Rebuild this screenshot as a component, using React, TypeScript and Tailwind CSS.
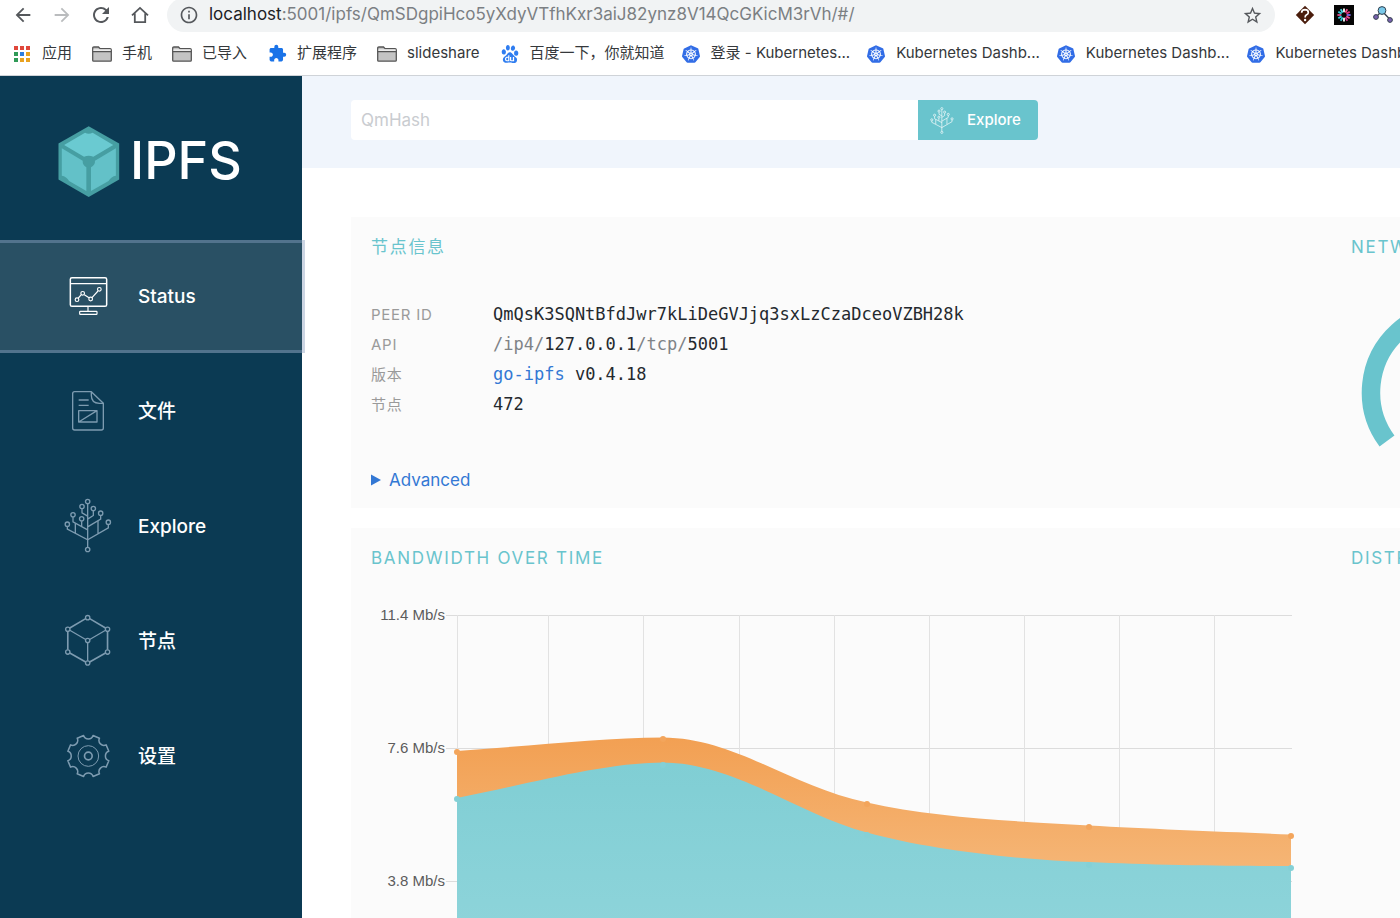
import React from "react";
import { MdArrowBack, MdArrowForward, MdExtension, MdInfoOutline, MdRefresh, MdStarBorder } from "react-icons/md";
import { SiBaidu, SiKubernetes } from "react-icons/si";

type IconProps = { className?: string };

/* ---------- browser icons ---------- */

function HomeIcon() {
  return (
    <svg className="h-5 w-5" viewBox="0 0 20 20" fill="none" stroke="#55585c" strokeWidth="1.8">
      <path d="M2 10.4 10 2.9l8 7.5M4.8 8.6v8.6h10.4V8.6" />
    </svg>
  );
}

function AppsIcon() {
  const colors = ["#e0473b", "#e0473b", "#e0473b", "#2f9a57", "#2a7de1", "#e9a220", "#2f9a57", "#e9a220", "#e9a220"];
  return (
    <svg className="h-4 w-4" viewBox="0 0 16 16">
      {colors.map((c, i) => (
        <rect key={i} x={(i % 3) * 6} y={Math.floor(i / 3) * 6} width="4" height="4" fill={c} />
      ))}
    </svg>
  );
}

function FolderIcon() {
  return (
    <svg className="h-4 w-5" viewBox="0 0 20 16" fill="#c4c4c4" stroke="#555" strokeWidth="1.3">
      <path d="M.7 14.2V2.2Q.7 1 1.9 1h4.6l1.6 1.7h10Q19.3 2.7 19.3 4v10.2Q19.3 15.2 18.3 15.2H1.7Q.7 15.2.7 14.2Z" />
      <path d="M1.4 3.4h17.2v1.8H1.4z" fill="#f4f4f4" stroke="none" />
      <path d="M.7 5.6h18.6" />
    </svg>
  );
}

function QuestionExtIcon() {
  return (
    <svg className="h-5 w-5" viewBox="0 0 20 20">
      <path d="M10 .8 19.2 10 10 19.2.8 10Z" fill="#4a1d0c" />
      <path d="M6.6 7.8Q6.7 4.7 10 4.7q3.300.1 3.300 2.700 0 1.500-1.700 2.400-1.500.8-1.500 2.600" fill="none" stroke="#fff" strokeWidth="1.700" />
      <circle cx="10.100" cy="15" r="1.200" fill="#fff" />
    </svg>
  );
}

function BurstExtIcon() {
  const colors = ["#ffffff", "#f0508c", "#e0307a", "#7f6cf0", "#f0508c", "#d0308a", "#ffffff", "#35c9d8", "#35c9d8", "#e05090", "#35c9d8", "#49d9e6"];
  return (
    <svg className="h-5 w-5" viewBox="0 0 20 20">
      <rect width="20" height="20" fill="#050505" />
      {colors.map((c, i) => (
        <path key={i} d="M10 3.4v3.9" stroke={c} strokeWidth="1.8" transform={`rotate(${i * 30} 10 10)`} />
      ))}
    </svg>
  );
}

function NodesExtIcon() {
  return (
    <svg className="h-5 w-5" viewBox="0 0 20 20" stroke="#33414f" strokeWidth="1">
      <path d="M3 12 9 6l8.5 9" fill="none" strokeWidth="1.3" />
      <circle cx="9" cy="5.5" r="3.9" fill="#79c9ea" />
      <circle cx="3" cy="12" r="2.4" fill="#7b62b0" />
      <circle cx="17" cy="15" r="2.4" fill="#7b62b0" />
    </svg>
  );
}

/* ---------- application icons ---------- */

function IpfsCube() {
  return (
    <svg className="h-[71px] w-[62px]" viewBox="176 77 186 214">
      <path d="M268 78 360 130v108l-92 53-91-53V130Z" fill="#469ea2" />
      <path d="M194 134 257 97q11 7 23 0l62 37-60 36q-14-6-28 0Z" fill="#6acad1" />
      <path d="M187 144 250 182q-1 13 11 19v72l-52-30q-8-14-22-16Z" fill="#63c1c8" />
      <path d="M350 144 287 182q1 13-12 19v72l53-30q8-14 22-16Z" fill="#63c1c8" />
    </svg>
  );
}

function StatusIcon({ className }: IconProps) {
  return (
    <svg className={className} viewBox="208 524 117 120" fill="none" stroke="currentColor" strokeWidth="3.5">
      <rect x="212" y="529" width="109" height="86" rx="5" strokeWidth="4.5" />
      <path d="M212 547h109M265 615v14" />
      <rect x="240" y="630" width="52" height="9" rx="2" />
      <path d="m236 590 9-10M254 580l14 9M277 589l18-20" />
      <circle cx="232" cy="595" r="5.5" />
      <circle cx="249" cy="576" r="5.5" />
      <circle cx="273" cy="593" r="5.5" />
      <circle cx="299" cy="564" r="5.5" />
    </svg>
  );
}

function FilesIcon({ className }: IconProps) {
  return (
    <svg className={className} viewBox="82 57 120 126" fill="none" stroke="currentColor" strokeWidth="4" strokeLinejoin="round">
      <path d="M152 62h-50q-6 0-6 6v103q0 6 6 6h80q6 0 6-6V97Z" />
      <path d="M152 62v11q0 24 24 24h12" />
      <path d="M114 87h30M114 103h30M114 119h55v34h-55zM114 153l55-34" />
    </svg>
  );
}

function TreeIcon({ className }: IconProps) {
  const tips = [[141, 394], [124, 409], [158, 415], [97, 434], [180, 429], [123, 446], [80, 462], [203, 456], [141, 538]];
  return (
    <svg className={className} viewBox="70 384 144 164" fill="none" stroke="currentColor" strokeWidth="4">
      <path d="M141 401v130M124 416v12l17 10M158 422v14l-17 11M97 441v14l44 24M123 453v15M180 436v11l-39 23" />
      <path d="M104 459v29M172 452v37M80 469v8l61 32 62-36v-10" />
      {tips.map(([x, y]) => (
        <circle key={`${x}-${y}`} cx={x} cy={y} r="6.5" />
      ))}
    </svg>
  );
}

function PeersIcon({ className }: IconProps) {
  const nodes = [[141, 83], [81, 118], [201, 118], [141, 152], [81, 187], [201, 187], [141, 220]];
  return (
    <svg className={className} viewBox="70 72 144 160" fill="none" stroke="currentColor" strokeWidth="4">
      <path d="m87 114 48-28M147 86l48 28M81 125v55M201 125v55M87 190l48 27M147 217l48-27" strokeWidth="5" />
      <path d="m87 121 48 28M195 121l-48 28M141 159v54" />
      {nodes.map(([x, y]) => (
        <circle key={`${x}-${y}`} cx={x} cy={y} r="6.5" />
      ))}
    </svg>
  );
}

const gearPath = (() => {
  const at = (deg: number, r: number) => {
    const a = ((deg - 90) * Math.PI) / 180;
    return `${(Math.cos(a) * r).toFixed(1)} ${(Math.sin(a) * r).toFixed(1)}`;
  };
  let d = `M${at(13, 63)}`;
  for (let k = 0; k < 8; k++) {
    const base = k * 45;
    d += `L${at(base + 32, 63)}A15 15 0 0 0 ${at(base + 58, 63)}`;
  }
  return d + "Z";
})();

function SettingsIcon({ className }: IconProps) {
  return (
    <svg className={className} viewBox="-67 -66 132 132" fill="none" stroke="currentColor" strokeWidth="3.5" strokeLinejoin="round">
      <path d={gearPath} strokeWidth="4.5" />
      <circle r="31" strokeWidth="3" />
      <circle r="11.5" strokeWidth="5" />
    </svg>
  );
}

/* ---------- browser chrome ---------- */

type Bookmark = { icon: React.ReactNode; label: string };

const bookmarks: Bookmark[] = [
  { icon: <FolderIcon />, label: "手机" },
  { icon: <FolderIcon />, label: "已导入" },
  { icon: <MdExtension className="h-[19px] w-[19px] text-[#1a73e8]" />, label: "扩展程序" },
  { icon: <FolderIcon />, label: "slideshare" },
  { icon: <SiBaidu className="h-[18px] w-[18px] text-[#2f7df0]" />, label: "百度一下，你就知道" },
];

const clusterBookmarks: Bookmark[] = [
  "登录 - Kubernetes...",
  "Kubernetes Dashb...",
  "Kubernetes Dashb...",
  "Kubernetes Dashb...",
].map((label) => ({ icon: <SiKubernetes className="h-[18px] w-[18px] text-[#326de6]" />, label }));

function BookmarkLink({ icon, label }: Bookmark) {
  return (
    <a href="#bookmark" className="flex shrink-0 items-center gap-2.5">
      <span className="flex w-5 justify-center">{icon}</span>
      {label}
    </a>
  );
}

function ToolButton({ label, children }: { label: string; children: React.ReactNode }) {
  return (
    <button type="button" aria-label={label} className="flex h-8 w-[39px] shrink-0 items-center justify-center text-[#55585c]">
      {children}
    </button>
  );
}

function BrowserBar() {
  return (
    <header className="shrink-0 border-b border-[#cfd3d8] bg-white">
      <div className="-mt-0.5 flex h-[34px] items-center pl-[3px]">
        <ToolButton label="Back"><MdArrowBack className="h-[22px] w-[22px]" /></ToolButton>
        <ToolButton label="Forward"><MdArrowForward className="h-[22px] w-[22px] text-[#babcbe]" /></ToolButton>
        <ToolButton label="Reload"><MdRefresh className="h-6 w-6" /></ToolButton>
        <ToolButton label="Home"><HomeIcon /></ToolButton>
        <div className="ml-2 flex h-full min-w-0 flex-1 items-center rounded-full bg-[#f1f3f4] pr-3 pl-3">
          <MdInfoOutline className="h-5 w-5 shrink-0 text-[#55585c]" />
          <p className="ml-2.5 min-w-0 flex-1 truncate text-[17px] text-[#7b7f83]">
            <span className="text-[#202124]">localhost</span>:5001/ipfs/QmSDgpiHco5yXdyVTfhKxr3aiJ82ynz8V14QcGKicM3rVh/#/
          </p>
          <button type="button" aria-label="Bookmark this page" className="text-[#55585c]">
            <MdStarBorder className="h-[21px] w-[21px]" />
          </button>
        </div>
        <div className="flex w-[125px] shrink-0 overflow-hidden pl-2.5">
          <ToolButton label="Question extension"><QuestionExtIcon /></ToolButton>
          <ToolButton label="Burst extension"><BurstExtIcon /></ToolButton>
          <ToolButton label="Nodes extension"><NodesExtIcon /></ToolButton>
        </div>
      </div>
      <nav aria-label="Bookmarks" className="flex h-[43px] items-center gap-4 overflow-hidden pl-3.5 text-[15px] whitespace-nowrap text-[#35383b]">
        <div className="flex shrink-0 items-center gap-5">
          <a href="#apps" className="flex shrink-0 items-center gap-3">
            <AppsIcon />
            应用
          </a>
          {bookmarks.map((b) => (
            <BookmarkLink key={b.label} {...b} />
          ))}
        </div>
        <div className="flex shrink-0 items-center gap-4">
          {clusterBookmarks.map((b, i) => (
            <BookmarkLink key={i} {...b} />
          ))}
        </div>
      </nav>
    </header>
  );
}

/* ---------- application ---------- */

const navItems = [
  { label: "Status", Icon: StatusIcon, size: "h-10 w-[39px]" },
  { label: "文件", Icon: FilesIcon, size: "h-[42px] w-10" },
  { label: "Explore", Icon: TreeIcon, size: "h-[55px] w-12" },
  { label: "节点", Icon: PeersIcon, size: "h-[53px] w-12" },
  { label: "设置", Icon: SettingsIcon, size: "h-11 w-11" },
];

function Sidebar() {
  return (
    <aside className="relative z-10 w-[302px] shrink-0 bg-[#0b3a53]">
      <h1 className="flex h-[163px] items-center gap-2.5 pl-[58px] pt-[7px] text-[52px] font-medium text-white">
        <IpfsCube />
        IPFS
      </h1>
      <nav aria-label="Main" className="flex flex-col gap-2 pt-1">
        {navItems.map(({ label, Icon, size }, i) => (
          <a
            key={label}
            href={`#${label}`}
            className={
              i === 0
                ? "flex h-[107px] items-center bg-[#295064] pl-16 text-[19px] font-medium text-white outline-[3px] outline-[#9aabc8]/50"
                : "flex h-[107px] items-center pl-16 text-[19px] font-medium text-white"
            }
          >
            <span className={i === 0 ? "flex w-12 justify-center pb-0.5 text-white" : "flex w-12 justify-center pb-0.5 text-[#7d9bb0]"}>
              <Icon className={size} />
            </span>
            <span className="ml-[26px] pt-0.5">{label}</span>
          </a>
        ))}
      </nav>
    </aside>
  );
}

function CardTitle({ children }: { children: React.ReactNode }) {
  return <h2 className="text-[17px] leading-6 tracking-widest whitespace-nowrap text-[#69c4cd]">{children}</h2>;
}

function InfoRow({ label, children }: { label: string; children: React.ReactNode }) {
  return (
    <div className="flex h-[30px] items-center">
      <dt className="w-[122px] text-[15px] tracking-wider text-[#9a9a9a]">{label}</dt>
      <dd className="font-['DejaVu_Sans_Mono',monospace] text-[17px] text-[#24292e]">{children}</dd>
    </div>
  );
}

function NodeInfo() {
  return (
    <div>
      <CardTitle>节点信息</CardTitle>
      <dl className="mt-[41px]">
        <InfoRow label="PEER ID">QmQsK3SQNtBfdJwr7kLiDeGVJjq3sxLzCzaDceoVZBH28k</InfoRow>
        <InfoRow label="API">
          <span className="text-[#7f8387]">/ip4/</span>127.0.0.1<span className="text-[#7f8387]">/tcp/</span>5001
        </InfoRow>
        <InfoRow label="版本">
          <a href="#go-ipfs" className="text-[#3378d4]">go-ipfs</a> v0.4.18
        </InfoRow>
        <InfoRow label="节点">472</InfoRow>
      </dl>
      <details className="mt-[46px] text-[17px] leading-7 text-[#3378d4]">
        <summary className="flex w-fit list-none items-center gap-2">
          <svg className="h-3 w-2.5" viewBox="0 0 10 12" fill="currentColor">
            <path d="M0 .5 10 6 0 11.5Z" />
          </svg>
          Advanced
        </summary>
      </details>
    </div>
  );
}

function TrafficGauge() {
  return (
    <svg className="mt-[41px] h-[190px] w-[204px]" viewBox="0 0 204 190" role="img" aria-label="Network traffic">
      <path d="M36 141A82 82 0 1 1 168 141" fill="none" stroke="#69c4cd" strokeWidth="18.5" />
    </svg>
  );
}

const ticks = [
  { y: 17, label: "11.4 Mb/s" },
  { y: 150, label: "7.6 Mb/s" },
  { y: 283, label: "3.8 Mb/s" },
  { y: 416, label: "0 b/s" },
];
const columns = [86, 177, 272, 368, 463, 558, 653, 748, 843];
const outgoing = [[86, 154], [292, 141], [496, 206], [718, 229], [920, 238]];
const incoming = [[86, 201], [292, 167], [496, 237], [718, 267], [920, 270]];

function BandwidthChart() {
  return (
    <svg className="mt-7 h-[440px] w-[930px]" viewBox="0 0 930 440" role="img" aria-label="Bandwidth over time">
      <defs>
        <linearGradient id="out" x1="0" y1="140" x2="0" y2="416" gradientUnits="userSpaceOnUse">
          <stop offset="0" stopColor="#f2a053" />
          <stop offset="1" stopColor="#f9cd9c" />
        </linearGradient>
        <linearGradient id="in" x1="0" y1="165" x2="0" y2="416" gradientUnits="userSpaceOnUse">
          <stop offset="0" stopColor="#80ced4" />
          <stop offset="1" stopColor="#94d7dd" />
        </linearGradient>
      </defs>
      <g stroke="#dcdcdc">
        {ticks.map((t) => (
          <path key={t.y} d={`M75 ${t.y + 0.5}H921`} />
        ))}
        {columns.map((x) => (
          <path key={x} d={`M${x + 0.5} 17V416`} stroke="#e2e2e2" />
        ))}
      </g>
      <g className="font-['Liberation_Sans',sans-serif]" fontSize="15" fill="#5c5c5c" textAnchor="end">
        {ticks.map((t) => (
          <text key={t.y} x="74" y={t.y + 5}>{t.label}</text>
        ))}
      </g>
      <path d="M86 153C159 148 229 140 292 139.5C364 140 419 188 496 204.5C564 220 644 223 718 227.5C779 231 859 234 920 236.5V416H86Z" fill="url(#out)" />
      {outgoing.map(([x, y]) => (
        <circle key={x} cx={x} cy={y} r="3" fill="#f3a55c" />
      ))}
      <path d="M86 200C154 187 229 165 292 164.500C364 165 429 217 496 234.500C559 252 649 262 718 264C779 267 859 268 920 268V416H86Z" fill="url(#in)" />
      {incoming.map(([x, y]) => (
        <circle key={x} cx={x} cy={y} r="3" fill="#84d0d6" />
      ))}
    </svg>
  );
}

function Card({ left, right }: { left: React.ReactNode; right: React.ReactNode }) {
  return (
    <section className="grid grid-cols-[960px_300px] gap-5 overflow-hidden bg-[#fbfbfb] px-5 pt-[18px] pb-3.5">
      {left}
      {right}
    </section>
  );
}

export default function App() {
  return (
    <div className="flex h-screen flex-col overflow-hidden bg-white font-['Inter','Noto_Sans_CJK_SC',sans-serif]">
      <BrowserBar />
      <div className="flex min-h-0 flex-1">
        <Sidebar />
        <main className="min-w-0 flex-1 overflow-hidden">
          <div className="bg-[#f0f5fc] px-[49px] pt-6 pb-7">
            <form className="flex h-10 w-[687px]" onSubmit={(e) => e.preventDefault()}>
              <input
                type="text"
                aria-label="QmHash"
                placeholder="QmHash"
                className="min-w-0 flex-1 rounded-l-sm bg-white px-2.5 pt-0.5 text-[17px] text-[#24292e] outline-none placeholder:text-[#c9ccd0]"
              />
              <button type="submit" className="flex w-[120px] items-center rounded-r-sm bg-[#69c4cd] pl-3 text-[15px] font-medium text-white">
                <TreeIcon className="h-[27px] w-6" />
                <span className="ml-[13px]">Explore</span>
              </button>
            </form>
          </div>
          <div className="flex flex-col gap-5 pt-[49px] pl-[49px]">
            <Card
              left={<NodeInfo />}
              right={
                <div>
                  <CardTitle>NETWORK TRAFFIC</CardTitle>
                  <TrafficGauge />
                </div>
              }
            />
            <Card
              left={
                <div>
                  <CardTitle>BANDWIDTH OVER TIME</CardTitle>
                  <BandwidthChart />
                </div>
              }
              right={<CardTitle>DISTRIBUTION OF PEERS</CardTitle>}
            />
          </div>
        </main>
      </div>
    </div>
  );
}
